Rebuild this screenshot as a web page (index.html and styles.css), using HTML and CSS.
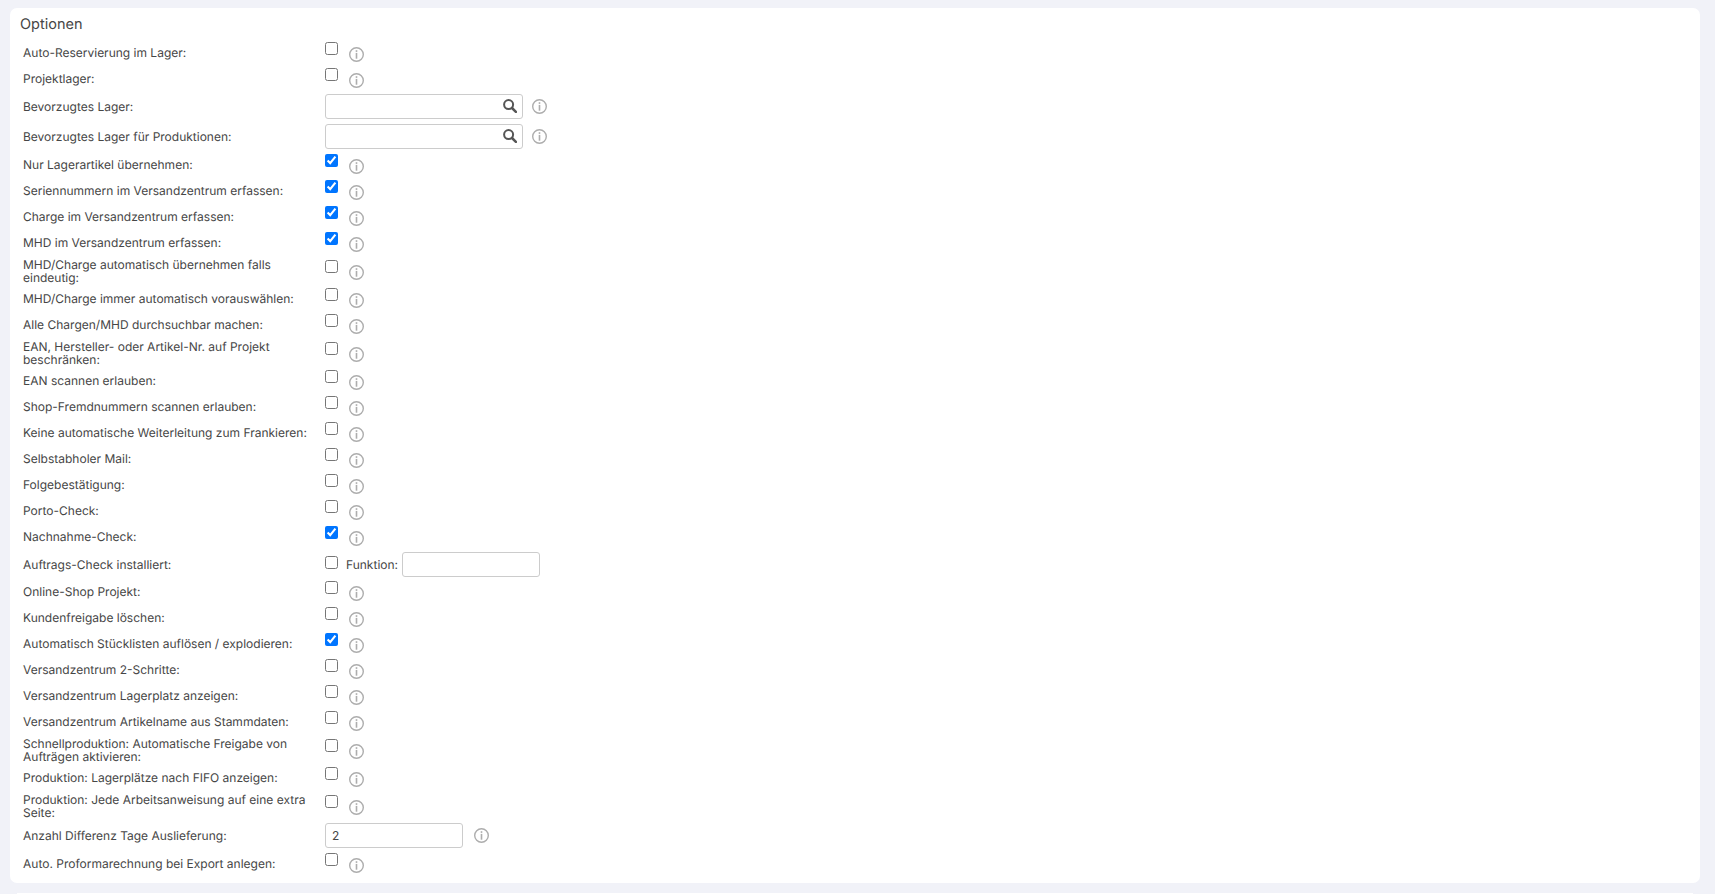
FILE: index.html
```html
<!DOCTYPE html>
<html lang="de">
<head>
<meta charset="UTF-8">
<meta name="viewport" content="width=device-width, initial-scale=1.0">
<title>Optionen</title>
<link rel="stylesheet" href="styles.css">
</head>
<body>

<svg class="defs" width="0" height="0" aria-hidden="true">
    <symbol id="info" viewBox="0 0 15 15">
        <circle cx="7.5" cy="7.5" r="6.8" fill="none" stroke="currentColor" stroke-width="1.4"/>
        <rect x="6.7" y="3.2" width="1.6" height="1.7" fill="currentColor"/>
        <rect x="6.7" y="5.9" width="1.6" height="5.8" fill="currentColor"/>
    </symbol>
    <symbol id="search" viewBox="0 0 14 14">
        <circle cx="5.6" cy="5.6" r="4.5" fill="none" stroke="currentColor" stroke-width="2"/>
        <path d="M9 9 L12.9 12.9" fill="none" stroke="currentColor" stroke-width="2.5" stroke-linecap="round"/>
    </symbol>
</svg>

<div class="card">
    <h2 class="card-title">Optionen</h2>

    <div class="row">
        <label class="lbl">Auto-Reservierung im Lager:</label>
        <div class="ctl"><input type="checkbox"><svg class="info"><use href="#info"/></svg></div>
    </div>
    <div class="row">
        <label class="lbl">Projektlager:</label>
        <div class="ctl"><input type="checkbox"><svg class="info"><use href="#info"/></svg></div>
    </div>
    <div class="row">
        <label class="lbl">Bevorzugtes Lager:</label>
        <div class="ctl ctl-input">
            <div class="search-box"><input type="text" class="txt txt-search"><svg class="search-icon"><use href="#search"/></svg></div>
            <svg class="info info-input"><use href="#info"/></svg>
        </div>
    </div>
    <div class="row">
        <label class="lbl">Bevorzugtes Lager für Produktionen:</label>
        <div class="ctl ctl-input">
            <div class="search-box"><input type="text" class="txt txt-search"><svg class="search-icon"><use href="#search"/></svg></div>
            <svg class="info info-input"><use href="#info"/></svg>
        </div>
    </div>
    <div class="row">
        <label class="lbl">Nur Lagerartikel übernehmen:</label>
        <div class="ctl"><input type="checkbox" checked><svg class="info"><use href="#info"/></svg></div>
    </div>
    <div class="row">
        <label class="lbl">Seriennummern im Versandzentrum erfassen:</label>
        <div class="ctl"><input type="checkbox" checked><svg class="info"><use href="#info"/></svg></div>
    </div>
    <div class="row">
        <label class="lbl">Charge im Versandzentrum erfassen:</label>
        <div class="ctl"><input type="checkbox" checked><svg class="info"><use href="#info"/></svg></div>
    </div>
    <div class="row">
        <label class="lbl">MHD im Versandzentrum erfassen:</label>
        <div class="ctl"><input type="checkbox" checked><svg class="info"><use href="#info"/></svg></div>
    </div>
    <div class="row">
        <label class="lbl lbl-two">MHD/Charge automatisch übernehmen falls eindeutig:</label>
        <div class="ctl"><input type="checkbox"><svg class="info"><use href="#info"/></svg></div>
    </div>
    <div class="row">
        <label class="lbl">MHD/Charge immer automatisch vorauswählen:</label>
        <div class="ctl"><input type="checkbox"><svg class="info"><use href="#info"/></svg></div>
    </div>
    <div class="row">
        <label class="lbl">Alle Chargen/MHD durchsuchbar machen:</label>
        <div class="ctl"><input type="checkbox"><svg class="info"><use href="#info"/></svg></div>
    </div>
    <div class="row">
        <label class="lbl lbl-two">EAN, Hersteller- oder Artikel-Nr. auf Projekt beschränken:</label>
        <div class="ctl"><input type="checkbox"><svg class="info"><use href="#info"/></svg></div>
    </div>
    <div class="row">
        <label class="lbl">EAN scannen erlauben:</label>
        <div class="ctl"><input type="checkbox"><svg class="info"><use href="#info"/></svg></div>
    </div>
    <div class="row">
        <label class="lbl">Shop-Fremdnummern scannen erlauben:</label>
        <div class="ctl"><input type="checkbox"><svg class="info"><use href="#info"/></svg></div>
    </div>
    <div class="row">
        <label class="lbl">Keine automatische Weiterleitung zum Frankieren:</label>
        <div class="ctl"><input type="checkbox"><svg class="info"><use href="#info"/></svg></div>
    </div>
    <div class="row">
        <label class="lbl">Selbstabholer Mail:</label>
        <div class="ctl"><input type="checkbox"><svg class="info"><use href="#info"/></svg></div>
    </div>
    <div class="row">
        <label class="lbl">Folgebestätigung:</label>
        <div class="ctl"><input type="checkbox"><svg class="info"><use href="#info"/></svg></div>
    </div>
    <div class="row">
        <label class="lbl">Porto-Check:</label>
        <div class="ctl"><input type="checkbox"><svg class="info"><use href="#info"/></svg></div>
    </div>
    <div class="row">
        <label class="lbl">Nachnahme-Check:</label>
        <div class="ctl"><input type="checkbox" checked><svg class="info"><use href="#info"/></svg></div>
    </div>
    <div class="row">
        <label class="lbl">Auftrags-Check installiert:</label>
        <div class="ctl ctl-input ctl-funktion">
            <input type="checkbox">
            <span class="funktion-lbl">Funktion:</span>
            <input type="text" class="txt txt-funktion">
        </div>
    </div>
    <div class="row">
        <label class="lbl">Online-Shop Projekt:</label>
        <div class="ctl"><input type="checkbox"><svg class="info"><use href="#info"/></svg></div>
    </div>
    <div class="row">
        <label class="lbl">Kundenfreigabe löschen:</label>
        <div class="ctl"><input type="checkbox"><svg class="info"><use href="#info"/></svg></div>
    </div>
    <div class="row">
        <label class="lbl">Automatisch Stücklisten auflösen / explodieren:</label>
        <div class="ctl"><input type="checkbox" checked><svg class="info"><use href="#info"/></svg></div>
    </div>
    <div class="row">
        <label class="lbl">Versandzentrum 2-Schritte:</label>
        <div class="ctl"><input type="checkbox"><svg class="info"><use href="#info"/></svg></div>
    </div>
    <div class="row">
        <label class="lbl">Versandzentrum Lagerplatz anzeigen:</label>
        <div class="ctl"><input type="checkbox"><svg class="info"><use href="#info"/></svg></div>
    </div>
    <div class="row">
        <label class="lbl">Versandzentrum Artikelname aus Stammdaten:</label>
        <div class="ctl"><input type="checkbox"><svg class="info"><use href="#info"/></svg></div>
    </div>
    <div class="row">
        <label class="lbl lbl-two">Schnellproduktion: Automatische Freigabe von Aufträgen aktivieren:</label>
        <div class="ctl"><input type="checkbox"><svg class="info"><use href="#info"/></svg></div>
    </div>
    <div class="row">
        <label class="lbl">Produktion: Lagerplätze nach FIFO anzeigen:</label>
        <div class="ctl"><input type="checkbox"><svg class="info"><use href="#info"/></svg></div>
    </div>
    <div class="row">
        <label class="lbl lbl-two">Produktion: Jede Arbeitsanweisung auf eine extra Seite:</label>
        <div class="ctl"><input type="checkbox"><svg class="info"><use href="#info"/></svg></div>
    </div>
    <div class="row">
        <label class="lbl">Anzahl Differenz Tage Auslieferung:</label>
        <div class="ctl ctl-input">
            <input type="text" class="txt txt-number" value="2">
            <svg class="info info-number"><use href="#info"/></svg>
        </div>
    </div>
    <div class="row">
        <label class="lbl">Auto. Proformarechnung bei Export anlegen:</label>
        <div class="ctl"><input type="checkbox"><svg class="info"><use href="#info"/></svg></div>
    </div>
</div>

<div class="card-next"></div>

</body>
</html>
```

FILE: styles.css
```css
html, body {
    height: 100%;
    overflow: hidden;
}
body {
    margin: 0;
    padding: 8px 15px 0 10px;
    box-sizing: border-box;
    background-color: #f1f2f8;
    font-family: Inter, "Noto Sans", sans-serif;
    font-size: 12px;
    color: #464646;
    text-rendering: geometricPrecision;
}
.defs {
    position: absolute;
}
.card {
    background-color: #fff;
    border-radius: 7px;
    padding: 8px 8px 7px 13px;
    margin-bottom: 10px;
}
/* nur der obere Rand der naechsten Karte ist sichtbar */
.card-next {
    height: 1px;
    background-color: #fff;
    margin: 0 7px;
}
.card-title {
    margin: 0 0 6px -3px;
    font-size: 14.5px;
    line-height: 17px;
    font-weight: 400;
    color: #464646;
}
/* Zeilen */
.row {
    display: grid;
    grid-template-columns: 302px 1fr;
    align-items: center;
}
.lbl {
    padding: 2px 0 1px;
    line-height: 13px;
    width: 290px;
}
.lbl-two {
    padding: 3px 0 1px;
}
.ctl {
    display: flex;
    align-items: flex-start;
    box-sizing: border-box;
    height: 26px;
    padding-top: 3px;
}
.ctl-input {
    height: 30px;
}
.ctl input[type="checkbox"] {
    width: 13px;
    height: 13px;
    margin: 0;
    flex: none;
}
/* Info-Icon */
.info {
    width: 15px;
    height: 15px;
    margin: 5px 0 0 11px;
    color: #adadad;
    flex: none;
}
.info-input {
    margin: 5px 0 0 9px;
}
.info-number {
    margin: 5px 0 0 11px;
}
/* Eingabefelder */
.txt {
    box-sizing: border-box;
    height: 25px;
    margin: 0;
    padding: 0 6px;
    border: 1px solid #ccc;
    border-radius: 3px;
    background-color: #fff;
    font-family: inherit;
    font-size: 12px;
    color: #464646;
}
.search-box {
    position: relative;
    width: 198px;
    height: 25px;
}
.txt-search {
    width: 100%;
}
.search-icon {
    position: absolute;
    top: 5px;
    right: 6px;
    width: 14px;
    height: 14px;
    color: #555;
}
.txt-number {
    width: 138px;
}
.txt-funktion {
    width: 138px;
    margin-left: 4px;
}
.ctl-funktion {
    height: 29px;
}
.ctl-funktion input[type="checkbox"] {
    margin-top: 4px;
}
.funktion-lbl {
    margin-left: 8px;
    line-height: 25px;
}
```
